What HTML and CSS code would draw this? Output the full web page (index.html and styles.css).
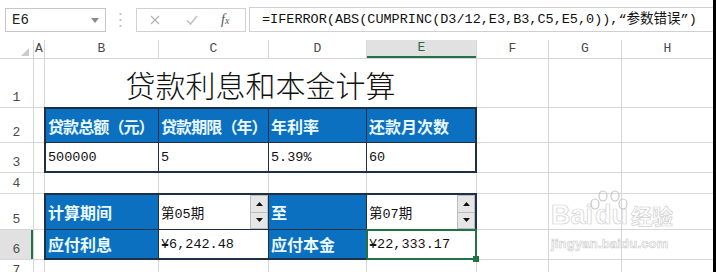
FILE: index.html
```html
<!DOCTYPE html>
<html lang="zh-CN">
<head>
<meta charset="utf-8">
<title>贷款利息和本金计算</title>
<link rel="stylesheet" href="styles.css">
</head>
<body>
<div class="app">
  <div class="fbar">
    <div class="namebox">
      <span>E6</span>
      <svg class="dd" width="8" height="5" viewBox="0 0 8 5"><polygon points="0,0 8,0 4,5" fill="#8a8a8a"/></svg>
    </div>
    <svg class="dots" width="3" height="14" viewBox="0 0 3 14"><rect x="0.5" y="0" width="2" height="2" fill="#c4c4c4"/><rect x="0.5" y="6" width="2" height="2" fill="#c4c4c4"/><rect x="0.5" y="12" width="2" height="2" fill="#c4c4c4"/></svg>
    <div class="fxbox">
      <svg class="ic-x" width="10" height="10" viewBox="0 0 10 10"><path d="M1 1 L9 9 M9 1 L1 9" stroke="#b4b4b4" stroke-width="1.3" fill="none"/></svg>
      <svg class="ic-ok" width="12" height="10" viewBox="0 0 12 10"><path d="M1 5.5 L4.5 9 L11 1" stroke="#c2c2c2" stroke-width="1.6" fill="none"/></svg>
      <span class="fx">f<span class="fxs">x</span></span>
    </div>
    <div class="finput">=IFERROR(ABS(CUMPRINC(D3/12,E3,B3,C5,E5,0)),“参数错误”)</div>
  </div>

  <div class="sheet">
    <!-- header row -->
    <div class="corner"><svg width="8" height="8" viewBox="0 0 8 8"><polygon points="8,0 8,8 0,8" fill="#cbcbcb"/></svg></div>
    <div class="ch">A</div>
    <div class="ch">B</div>
    <div class="ch">C</div>
    <div class="ch">D</div>
    <div class="ch ch-sel">E</div>
    <div class="ch">F</div>
    <div class="ch">G</div>
    <div class="ch">H</div>

    <!-- row 1 -->
    <div class="rh">1</div>
    <div class="c"></div>
    <div class="title">贷款利息和本金计算</div>
    <div class="c"></div><div class="c"></div><div class="c"></div>

    <!-- row 2 (table spans rows 2-3) -->
    <div class="rh">2</div>
    <div class="c"></div>
    <div class="tbl tbl-a">
      <div class="hd tight">贷款总额（元）</div>
      <div class="hd tight">贷款期限（年）</div>
      <div class="hd">年利率</div>
      <div class="hd">还款月次数</div>
      <div class="vl">500000</div>
      <div class="vl">5</div>
      <div class="vl">5.39%</div>
      <div class="vl">60</div>
    </div>
    <div class="c"></div><div class="c"></div><div class="c"></div>

    <!-- row 3 -->
    <div class="rh">3</div>
    <div class="c"></div>
    <div class="c"></div><div class="c"></div><div class="c"></div>

    <!-- row 4 -->
    <div class="rh">4</div>
    <div class="c"></div><div class="c"></div><div class="c"></div><div class="c"></div>
    <div class="c"></div><div class="c"></div><div class="c"></div><div class="c"></div>

    <!-- row 5 (table spans rows 5-6) -->
    <div class="rh">5</div>
    <div class="c"></div>
    <div class="tbl tbl-b">
      <div class="hd">计算期间</div>
      <div class="vl">第05期
        <div class="spin">
          <div class="sb"><svg width="7" height="4" viewBox="0 0 7 4"><polygon points="0,4 7,4 3.5,0" fill="#111"/></svg></div>
          <div class="sb"><svg width="7" height="4" viewBox="0 0 7 4"><polygon points="0,0 7,0 3.5,4" fill="#111"/></svg></div>
        </div>
      </div>
      <div class="hd">至</div>
      <div class="vl">第07期
        <div class="spin">
          <div class="sb"><svg width="7" height="4" viewBox="0 0 7 4"><polygon points="0,4 7,4 3.5,0" fill="#111"/></svg></div>
          <div class="sb"><svg width="7" height="4" viewBox="0 0 7 4"><polygon points="0,0 7,0 3.5,4" fill="#111"/></svg></div>
        </div>
      </div>
      <div class="hd">应付利息</div>
      <div class="vl">¥6,242.48</div>
      <div class="hd">应付本金</div>
      <div class="vl vl-sel">¥22,333.17<div class="selbox"></div><div class="handle"></div></div>
    </div>
    <div class="c"></div><div class="c"></div><div class="c"></div>

    <!-- row 6 -->
    <div class="rh rh-sel">6</div>
    <div class="c"></div>
    <div class="c"></div><div class="c"></div><div class="c"></div>

    <!-- row 7 -->
    <div class="rh">7</div>
    <div class="c"></div><div class="c"></div><div class="c"></div><div class="c"></div>
    <div class="c"></div><div class="c"></div><div class="c"></div><div class="c"></div>
  </div>

  <div class="wm">
    <div class="wm1"><span>Bai</span><span class="wmdu"><svg class="paw" width="40" height="22" viewBox="0 0 40 22"><g fill="none" stroke="#c8c8c8" stroke-width="1.2"><ellipse cx="6" cy="14" rx="4" ry="5"/><ellipse cx="14" cy="6" rx="4" ry="5"/><ellipse cx="26" cy="6" rx="4" ry="5"/><ellipse cx="34" cy="14" rx="4" ry="5"/></g></svg>du</span><span class="wmcn">经验</span></div>
    <div class="wm2">jingyan.baidu.com</div>
  </div>
</div>
</body>
</html>
```

FILE: styles.css
```css
* { box-sizing: border-box; }

body {
  margin: 0;
  background: #000;
}

.app {
  position: relative;
  width: 713px;
  height: 272px;
  overflow: hidden;
  background: #fff;
  font-family: "Liberation Mono", "Noto Sans CJK SC", monospace;
  color: #1a1a1a;
}

/* formula bar */
.fbar {
  display: flex;
  align-items: flex-start;
  height: 40px;
}

.namebox {
  margin: 8px 0 0 5px;
  width: 101px;
  height: 24px;
  border: 1px solid #c6c6c6;
  display: flex;
  align-items: center;
  justify-content: space-between;
  padding: 0 6px 0 6px;
  font-size: 14px;
  color: #222;
}

.dots {
  margin: 13px 0 0 13px;
}

.fxbox {
  margin: 8px 0 0 14px;
  width: 110px;
  height: 24px;
  border: 1px solid #d0d0d0;
  display: flex;
  align-items: center;
  padding-left: 13px;
}

.ic-ok { margin-left: 26px; }

.fx {
  margin-left: 23px;
  font-family: "Liberation Serif", serif;
  font-style: italic;
  font-size: 14px;
  color: #555;
}

.fxs { font-size: 10px; }

.finput {
  margin: 7px 0 0 3px;
  flex: 1;
  height: 25px;
  border: 1px solid #d0d0d0;
  border-right: none;
  padding-left: 12px;
  font-size: 13.5px;
  line-height: 23px;
  white-space: nowrap;
  overflow: hidden;
  color: #111;
}

/* sheet */
.sheet {
  display: grid;
  grid-template-columns: 33px 10px 113px 109px 97px 109px 71px 72px 1fr;
  grid-template-rows: 18px 48px 34px 29px 20px 35px 29px 20px;
  gap: 1px;
  background: #d6d6d6;
}

.c { background: #fff; }

.corner {
  background: #fff;
  display: flex;
  justify-content: flex-end;
  align-items: flex-end;
  padding: 0 4px 2px 0;
}

.ch {
  background: #fff;
  text-align: center;
  font-size: 13px;
  line-height: 18px;
  color: #4a4a4a;
}

.ch-sel {
  background: #e1e1e1;
  border-bottom: 2px solid #217346;
  line-height: 16px;
  color: #2b6a47;
}

.rh {
  background: #fff;
  display: flex;
  justify-content: center;
  align-items: flex-end;
  padding-bottom: 2px;
  font-size: 13px;
  line-height: 14px;
  color: #4a4a4a;
}

.rh-sel {
  background: #e1e1e1;
  border-right: 2px solid #217346;
  padding-left: 2px;
}

.title {
  grid-column: span 4;
  background: #fff;
  display: flex;
  align-items: center;
  justify-content: center;
  font-family: "Noto Sans CJK SC", sans-serif;
  font-weight: 300;
  font-size: 30px;
  color: #111;
  padding-top: 2px;
}

/* tables */
.tbl {
  grid-column: span 4;
  grid-row: span 2;
  margin: -1px;
  border: 2px solid #1d3045;
  background: #1d3045;
  display: grid;
  grid-template-columns: 112px 109px 97px 1fr;
  gap: 1px;
}

.tbl-a { grid-template-rows: 33px 1fr; }
.tbl-b { grid-template-rows: 34px 1fr; }

.hd {
  background: #0b70bf;
  color: #e9f9ff;
  font-family: "Noto Sans CJK SC", sans-serif;
  font-weight: 700;
  font-size: 16px;
  display: flex;
  align-items: center;
  padding-left: 2px;
  white-space: nowrap;
  overflow: hidden;
}

.tight { letter-spacing: -0.9px; }

.vl {
  background: #fff;
  display: flex;
  align-items: center;
  padding-left: 2px;
  font-size: 13.5px;
  color: #111;
  white-space: nowrap;
}

.spin {
  margin-left: auto;
  align-self: stretch;
  width: 18px;
  display: flex;
  flex-direction: column;
}

.sb {
  flex: 1;
  background: #e6e6e6;
  border: 1px solid #bdbdbd;
  display: flex;
  align-items: center;
  justify-content: center;
}

.sb + .sb { border-top: none; }

.vl-sel { position: relative; }

.selbox {
  position: absolute;
  left: -1px;
  top: -1px;
  right: -2px;
  bottom: -2px;
  border: 2px solid #217346;
}

.handle {
  position: absolute;
  right: -4px;
  bottom: -4px;
  width: 6px;
  height: 6px;
  background: #217346;
}

/* watermark */
.wm {
  position: absolute;
  left: 551px;
  top: 196px;
  color: rgba(255, 255, 255, 0.85);
  -webkit-text-stroke: 0.7px #cfcfcf;
  font-family: "Liberation Sans", sans-serif;
  font-weight: 700;
  pointer-events: none;
}

.wm1 {
  display: flex;
  align-items: flex-end;
  font-size: 27px;
  line-height: 38px;
}

.wmdu {
  position: relative;
  margin-left: 2px;
}

.paw {
  position: absolute;
  left: -6px;
  top: -6px;
}

.wmcn {
  margin-left: 3px;
  font-family: "Noto Sans CJK SC", sans-serif;
  font-size: 21px;
}

.wm2 {
  font-size: 13px;
  line-height: 16px;
  margin-top: 2px;
  letter-spacing: 0.2px;
}
```
